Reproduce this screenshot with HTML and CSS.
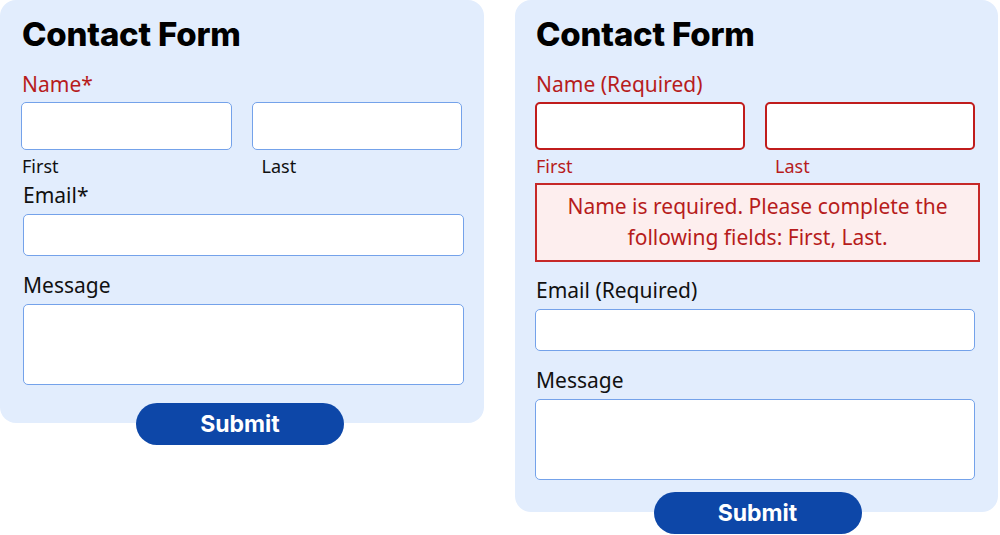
FILE: index.html
```html
<!DOCTYPE html>
<html lang="en">
  <head>
    <meta charset="UTF-8" />
    <meta name="viewport" content="width=device-width, initial-scale=1.0" />
    <title>Contact Form</title>
    <link rel="stylesheet" href="styles.css">
  </head>

  <body>
    <main>
      <!-- Formulario sin validar -->
      <form class="contact">
        <div class="card">
          <h1>Contact Form</h1>
          <fieldset class="name">
            <legend class="label label-error">Name*</legend>
            <div class="name-row">
              <div class="name-part">
                <input type="text" class="field" />
                <span class="sub">First</span>
              </div>
              <div class="name-part">
                <input type="text" class="field" />
                <span class="sub sub-last">Last</span>
              </div>
            </div>
          </fieldset>
          <div class="group group-tight">
            <label class="label">Email*</label>
            <input type="email" class="field field-line" />
          </div>
          <div class="group">
            <label class="label">Message</label>
            <textarea class="field field-area"></textarea>
          </div>
        </div>
        <button type="button" class="submit submit-left">Submit</button>
      </form>

      <!-- Formulario con error de validacion -->
      <form class="contact contact-invalid">
        <div class="card card-invalid">
          <h1>Contact Form</h1>
          <fieldset class="name">
            <legend class="label label-error">Name (Required)</legend>
            <div class="name-row">
              <div class="name-part">
                <input type="text" class="field field-error" />
                <span class="sub sub-error">First</span>
              </div>
              <div class="name-part">
                <input type="text" class="field field-error" />
                <span class="sub sub-error sub-last">Last</span>
              </div>
            </div>
          </fieldset>
          <div class="error-box">
            Name is required. Please complete the following fields: First, Last.
          </div>
          <div class="group group-after-error">
            <label class="label">Email (Required)</label>
            <input type="email" class="field field-line" />
          </div>
          <div class="group">
            <label class="label">Message</label>
            <textarea class="field field-area"></textarea>
          </div>
        </div>
        <button type="button" class="submit">Submit</button>
      </form>
    </main>
  </body>
</html>
```

FILE: styles.css
```css
body {
  margin: 0;
  background: #fff;
  font-family: "Noto Sans", "Liberation Sans", sans-serif;
  color: #111;
}

main {
  display: flex;
  align-items: flex-start;
  gap: 31px;
}

.contact {
  display: flex;
  flex-direction: column;
  align-items: center;
  width: 484px;
}

.contact-invalid {
  width: 483px;
}

.card {
  box-sizing: border-box;
  width: 100%;
  background: #e2edfd;
  border-radius: 16px;
  padding: 14px 22px 38px 21px;
}

.card-invalid {
  padding: 14px 23px 32px 20px;
}

h1 {
  margin: 0;
  font-family: Inter, "Liberation Sans", sans-serif;
  font-weight: 800;
  font-size: 33px;
  line-height: 40px;
  color: #000;
  letter-spacing: -0.2px;
  padding-left: 1px;
}

fieldset {
  border: none;
  margin: 18px 0 0;
  padding: 0;
}

.label {
  display: block;
  padding: 0 0 0 1px;
  font-size: 21px;
  line-height: 24px;
  margin-bottom: 6px;
}

.card .group .label {
  margin-left: 1px;
}

.card-invalid .group .label {
  margin-left: 0;
}

.label-error {
  color: #b71c1c;
}

.name-row {
  display: flex;
  gap: 20px;
}

.name-part {
  flex: 1;
  display: flex;
  flex-direction: column;
}

.field {
  box-sizing: border-box;
  display: block;
  width: 100%;
  height: 48px;
  margin: 0;
  background: #fff;
  border: 1px solid #74a2ea;
  border-radius: 5px;
  font: inherit;
}

.field-error {
  border: 2.5px solid #c01c1c;
}

.field-line {
  height: 42px;
}

.field-area {
  height: 81px;
  resize: none;
}

.card .group .field {
  margin-left: 2px;
}

.card-invalid .group .field {
  margin-left: 0;
}

.sub {
  font-size: 18px;
  line-height: 20px;
  margin-top: 6px;
  padding-left: 1px;
}

.sub-last {
  margin-left: 9px;
}

.sub-error {
  color: #b71c1c;
}

.group {
  margin-top: 17px;
}

.group-tight {
  margin-top: 7px;
}

.group-after-error {
  margin-top: 16px;
}

.group .label {
  margin-bottom: 7px;
}

.error-box {
  margin: 7px -5px 0 0;
  padding: 6px 10px 7px;
  background: #fdeeee;
  border: 2px solid #c62828;
  color: #b71c1c;
  font-size: 21px;
  line-height: 31px;
  text-align: center;
}

.submit {
  margin-top: -20px;
  margin-left: 2px;
  width: 208px;
  height: 42px;
  border: none;
  border-radius: 21px;
  background: #0d47a8;
  color: #fff;
  font-family: Inter, "Liberation Sans", sans-serif;
  font-weight: 700;
  font-size: 23px;
  cursor: pointer;
}

.submit-left {
  margin-left: 0;
  margin-right: 4px;
}
```
